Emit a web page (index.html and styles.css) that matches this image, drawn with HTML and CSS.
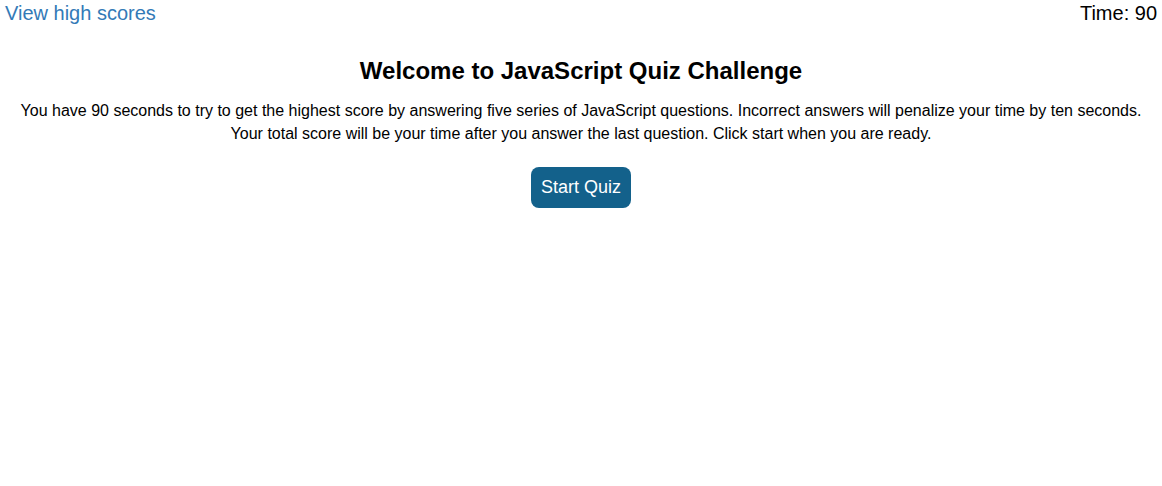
FILE: index.html
```html
<!DOCTYPE html>
<html>
<head>
<meta charset="utf-8">
<link rel="stylesheet" href="styles.css">
</head>
<body>
<header class="top">
  <a class="scores" href="#">View high scores</a>
  <div class="timer">Time: 90</div>
</header>
<main class="intro">
  <h1 class="title">Welcome to JavaScript Quiz Challenge</h1>
  <p class="desc">You have 90 seconds to try to get the highest score by answering five series of JavaScript questions. Incorrect answers will penalize your time by ten seconds. Your total score will be your time after you answer the last question. Click start when you are ready.</p>
  <button class="start">Start Quiz</button>
</main>
</body>
</html>
```
FILE: styles.css
```css
html, body {
  margin: 0;
  padding: 0;
  background: #fff;
  font-family: "Liberation Sans", Arial, sans-serif;
  color: #000;
}
.top {
  display: flex;
  justify-content: space-between;
  align-items: flex-start;
  padding: 2px 5px 0 5px;
  font-size: 20px;
  line-height: 23px;
}
.scores {
  color: #337ab7;
  text-decoration: none;
}
.timer {
  color: #000;
}
.intro {
  display: flex;
  flex-direction: column;
  align-items: center;
  text-align: center;
  padding: 0 10px;
}
.title {
  font-size: 24px;
  font-weight: bold;
  margin: 32px 0 0 0;
  line-height: 28px;
}
.desc {
  font-size: 16px;
  line-height: 23px;
  margin: 14px 0 0 0;
}
.start {
  margin-top: 22px;
  background: #13618b;
  color: #fff;
  border: none;
  border-radius: 8px;
  font-family: "Liberation Sans", Arial, sans-serif;
  font-size: 18px;
  padding: 0;
  white-space: nowrap;
  height: 41px;
  width: 100px;
}
```
